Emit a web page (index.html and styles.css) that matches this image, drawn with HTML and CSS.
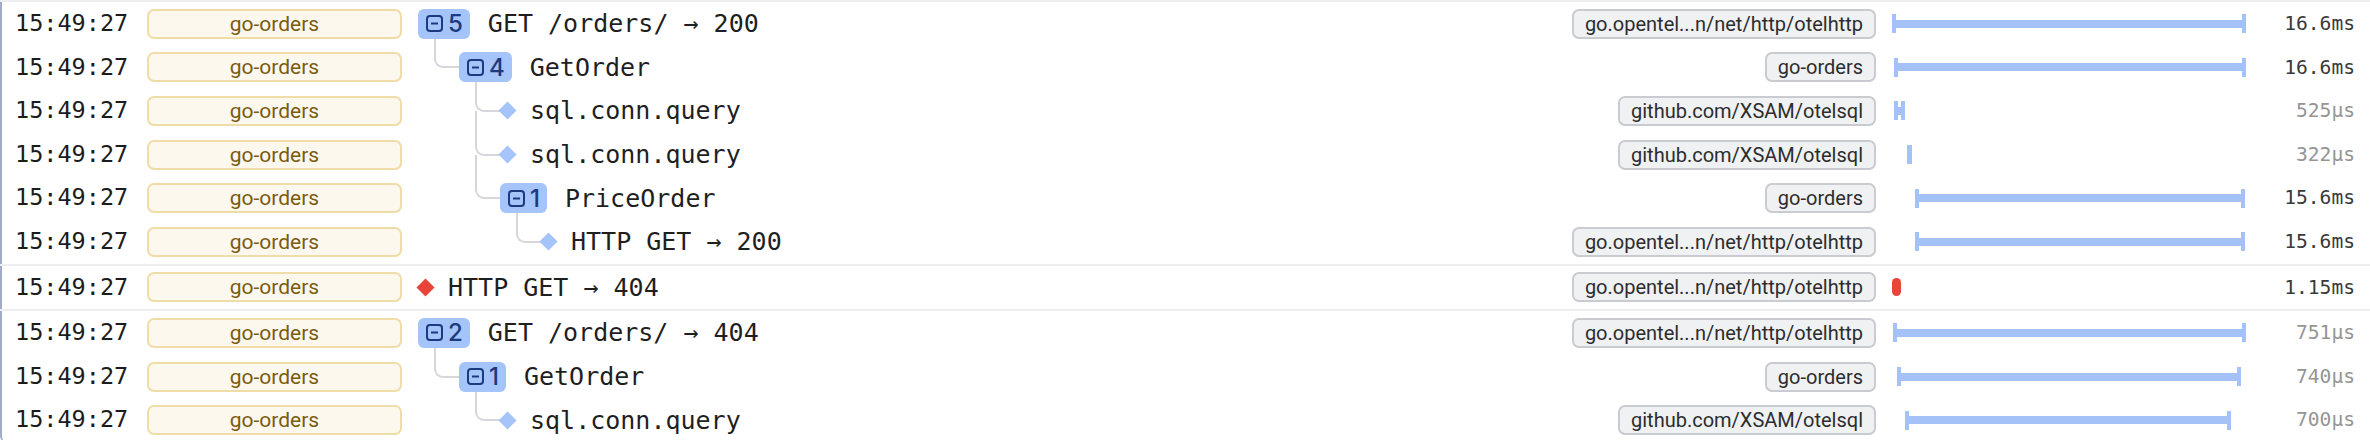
FILE: index.html
```html
<!DOCTYPE html>
<html>
<head>
<meta charset="utf-8">
<link rel="stylesheet" href="styles.css">
</head>
<body>
<div class="sep"></div>
<div class="group">
  <div class="row">
    <div class="time">15:49:27</div>
    <div class="svc"><span class="svc-badge">go-orders</span></div>
    <div class="tree d0">
      <span class="stem"></span>
      <span class="tb"><svg class="ico" width="17" height="17" viewBox="0 0 17 17"><rect x="1" y="1" width="15" height="15" rx="3"/><path d="M5 8.5h7"/></svg>5</span>
      <span class="name">GET /orders/ → 200</span>
    </div>
    <div class="libcell"><span class="lib">go.opentel...n/net/http/otelhttp</span></div>
    <div class="track"><span class="bar" style="left:0%;width:100%"></span></div>
    <div class="dur">16.6ms</div>
  </div>
  <div class="row">
    <div class="time">15:49:27</div>
    <div class="svc"><span class="svc-badge">go-orders</span></div>
    <div class="tree d1">
      <span class="elbow"></span>
      <span class="stem"></span>
      <span class="tb"><svg class="ico" width="17" height="17" viewBox="0 0 17 17"><rect x="1" y="1" width="15" height="15" rx="3"/><path d="M5 8.5h7"/></svg>4</span>
      <span class="name">GetOrder</span>
    </div>
    <div class="libcell"><span class="lib">go-orders</span></div>
    <div class="track"><span class="bar" style="left:0.6%;width:99.4%"></span></div>
    <div class="dur">16.6ms</div>
  </div>
  <div class="row">
    <div class="time">15:49:27</div>
    <div class="svc"><span class="svc-badge">go-orders</span></div>
    <div class="tree d2">
      <span class="elbow"></span>
      <span class="pass"></span>
      <svg class="dia" width="19" height="19" viewBox="0 0 19 19"><polygon points="9.5,0.5 18.5,9.5 9.5,18.5 0.5,9.5"/></svg>
      <span class="name leaf">sql.conn.query</span>
    </div>
    <div class="libcell"><span class="lib">github.com/XSAM/otelsql</span></div>
    <div class="track"><span class="bar" style="left:0.5%;width:3.1%"></span></div>
    <div class="dur us">525μs</div>
  </div>
  <div class="row">
    <div class="time">15:49:27</div>
    <div class="svc"><span class="svc-badge">go-orders</span></div>
    <div class="tree d2">
      <span class="elbow"></span>
      <span class="pass"></span>
      <svg class="dia" width="19" height="19" viewBox="0 0 19 19"><polygon points="9.5,0.5 18.5,9.5 9.5,18.5 0.5,9.5"/></svg>
      <span class="name leaf">sql.conn.query</span>
    </div>
    <div class="libcell"><span class="lib">github.com/XSAM/otelsql</span></div>
    <div class="track"><span class="bar" style="left:4.2%;width:1.5%"></span></div>
    <div class="dur us">322μs</div>
  </div>
  <div class="row">
    <div class="time">15:49:27</div>
    <div class="svc"><span class="svc-badge">go-orders</span></div>
    <div class="tree d2">
      <span class="elbow"></span>
      <span class="stem"></span>
      <span class="tb"><svg class="ico" width="17" height="17" viewBox="0 0 17 17"><rect x="1" y="1" width="15" height="15" rx="3"/><path d="M5 8.5h7"/></svg>1</span>
      <span class="name">PriceOrder</span>
    </div>
    <div class="libcell"><span class="lib">go-orders</span></div>
    <div class="track"><span class="bar" style="left:6.6%;width:93.2%"></span></div>
    <div class="dur">15.6ms</div>
  </div>
  <div class="row">
    <div class="time">15:49:27</div>
    <div class="svc"><span class="svc-badge">go-orders</span></div>
    <div class="tree d3">
      <span class="elbow"></span>
      <svg class="dia" width="19" height="19" viewBox="0 0 19 19"><polygon points="9.5,0.5 18.5,9.5 9.5,18.5 0.5,9.5"/></svg>
      <span class="name leaf">HTTP GET → 200</span>
    </div>
    <div class="libcell"><span class="lib">go.opentel...n/net/http/otelhttp</span></div>
    <div class="track"><span class="bar" style="left:6.6%;width:93.2%"></span></div>
    <div class="dur">15.6ms</div>
  </div>
</div>
<div class="sep"></div>
<div class="group">
  <div class="row">
    <div class="time">15:49:27</div>
    <div class="svc"><span class="svc-badge">go-orders</span></div>
    <div class="tree d0">
      <svg class="dia err" width="19" height="19" viewBox="0 0 19 19"><polygon points="9.5,0.5 18.5,9.5 9.5,18.5 0.5,9.5"/></svg>
      <span class="name leaf">HTTP GET → 404</span>
    </div>
    <div class="libcell"><span class="lib">go.opentel...n/net/http/otelhttp</span></div>
    <div class="track"><span class="pill"></span></div>
    <div class="dur">1.15ms</div>
  </div>
</div>
<div class="sep"></div>
<div class="group last">
  <div class="row">
    <div class="time">15:49:27</div>
    <div class="svc"><span class="svc-badge">go-orders</span></div>
    <div class="tree d0">
      <span class="stem"></span>
      <span class="tb"><svg class="ico" width="17" height="17" viewBox="0 0 17 17"><rect x="1" y="1" width="15" height="15" rx="3"/><path d="M5 8.5h7"/></svg>2</span>
      <span class="name">GET /orders/ → 404</span>
    </div>
    <div class="libcell"><span class="lib">go.opentel...n/net/http/otelhttp</span></div>
    <div class="track"><span class="bar" style="left:0.3%;width:99.6%"></span></div>
    <div class="dur us">751μs</div>
  </div>
  <div class="row">
    <div class="time">15:49:27</div>
    <div class="svc"><span class="svc-badge">go-orders</span></div>
    <div class="tree d1">
      <span class="elbow"></span>
      <span class="stem"></span>
      <span class="tb"><svg class="ico" width="17" height="17" viewBox="0 0 17 17"><rect x="1" y="1" width="15" height="15" rx="3"/><path d="M5 8.5h7"/></svg>1</span>
      <span class="name">GetOrder</span>
    </div>
    <div class="libcell"><span class="lib">go-orders</span></div>
    <div class="track"><span class="bar" style="left:1.3%;width:97.2%"></span></div>
    <div class="dur us">740μs</div>
  </div>
  <div class="row">
    <div class="time">15:49:27</div>
    <div class="svc"><span class="svc-badge">go-orders</span></div>
    <div class="tree d2">
      <span class="elbow"></span>
      <svg class="dia" width="19" height="19" viewBox="0 0 19 19"><polygon points="9.5,0.5 18.5,9.5 9.5,18.5 0.5,9.5"/></svg>
      <span class="name leaf">sql.conn.query</span>
    </div>
    <div class="libcell"><span class="lib">github.com/XSAM/otelsql</span></div>
    <div class="track"><span class="bar" style="left:3.7%;width:92.2%"></span></div>
    <div class="dur us">700μs</div>
  </div>
</div>
</body>
</html>
```

FILE: styles.css
```css
* { box-sizing: border-box; }

html, body {
  margin: 0;
  padding: 0;
  background: #ffffff;
}

body {
  width: 2370px;
  height: 440px;
  overflow: hidden;
  font-family: "DejaVu Sans Mono", monospace;
  color: #1f1f1f;
}

.sep {
  height: 2px;
  background: #eeeef0;
}

.group {
  border-left: 2px solid #9eacc8;
}

.group.last {
  border-bottom-left-radius: 6px;
}

.row {
  display: grid;
  grid-template-columns: 132px 255px 1fr auto 354px 109px;
  align-items: center;
  height: 43.6px;
  padding: 0 15px 0 13px;
}

.time {
  font-size: 23.5px;
  line-height: 1;
  color: #1c1c1c;
  white-space: nowrap;
}

.svc {
  display: flex;
}

.svc-badge {
  flex: 1;
  height: 30px;
  display: flex;
  align-items: center;
  justify-content: center;
  border: 2px solid #f0dca6;
  background: #fcf8ee;
  border-radius: 7px;
  font-family: Roboto, "Liberation Sans", sans-serif;
  font-size: 21px;
  color: #7a5c10;
}

.tree {
  --x: 0px;
  position: relative;
  height: 100%;
  display: flex;
  align-items: center;
  padding-left: calc(16px + var(--x));
  white-space: nowrap;
}

.d1 { --x: 41px; }
.d2 { --x: 82px; }
.d3 { --x: 123px; }

.elbow {
  position: absolute;
  left: calc(var(--x) - 9px);
  top: 0;
  height: calc(50% + 1px);
  width: 25px;
  border-left: 2px solid #d5d7dc;
  border-bottom: 2px solid #d5d7dc;
  border-bottom-left-radius: 9px;
}

.pass {
  position: absolute;
  left: calc(var(--x) - 9px);
  top: 50%;
  bottom: 0;
  border-left: 2px solid #d5d7dc;
}

.stem {
  position: absolute;
  left: calc(var(--x) + 32px);
  top: calc(50% + 14px);
  bottom: 0;
  border-left: 2px solid #d5d7dc;
}

.tb {
  position: relative;
  display: inline-flex;
  align-items: center;
  gap: 5px;
  height: 30px;
  padding: 0 7px 0 8px;
  background: #a4c4fa;
  border-radius: 6px;
  font-family: Inter, Roboto, sans-serif;
  font-weight: 500;
  font-size: 24px;
  color: #1b3a80;
}

.ico rect {
  fill: none;
  stroke: #1b3a80;
  stroke-width: 2;
}

.ico path {
  stroke: #1b3a80;
  stroke-width: 2;
}

.dia {
  position: relative;
  margin-left: -2px;
  flex: none;
}

.dia polygon {
  fill: #a4c4fa;
}

.dia.err polygon {
  fill: #e8443a;
}

.name {
  margin-left: 18px;
  font-size: 25px;
  line-height: 1;
  color: #1f1f1f;
}

.name.leaf {
  margin-left: 13px;
}

.libcell {
  display: flex;
  justify-content: flex-end;
  padding-right: 16px;
}

.lib {
  display: inline-flex;
  align-items: center;
  height: 30px;
  padding: 0 11px;
  border: 2px solid #c9cbd0;
  background: #f0f1f3;
  border-radius: 7px;
  font-family: Roboto, "Liberation Sans", sans-serif;
  font-size: 20px;
  color: #2d2d2d;
  white-space: nowrap;
}

.track {
  position: relative;
  height: 100%;
}

.bar {
  position: absolute;
  top: 50%;
  height: 8px;
  margin-top: -4px;
  background: #a4c2f8;
}

.bar::before,
.bar::after {
  content: "";
  position: absolute;
  top: -5.5px;
  width: 4px;
  height: 19px;
  background: #a4c2f8;
}

.bar::before { left: 0; }
.bar::after { right: 0; }

.pill {
  position: absolute;
  left: 0;
  top: 50%;
  width: 9px;
  height: 18px;
  margin-top: -9px;
  border-radius: 5px;
  background: #e8443a;
}

.dur {
  text-align: right;
  font-size: 19.6px;
  line-height: 1;
  color: #3a3a3a;
  white-space: nowrap;
}

.dur.us {
  color: #959595;
}
```
